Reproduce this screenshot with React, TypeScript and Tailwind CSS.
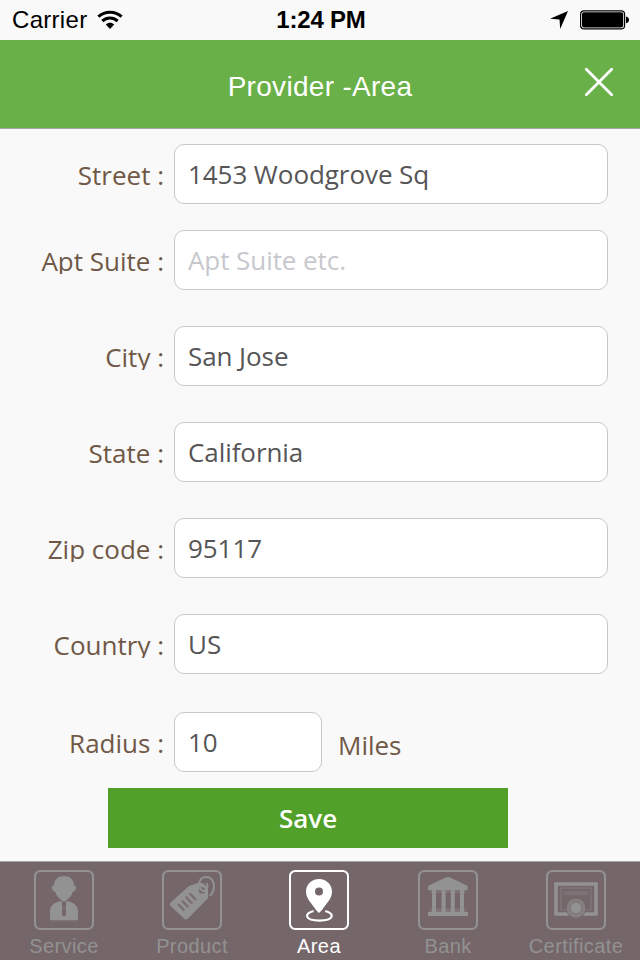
import type { ReactNode } from "react";

const sans = "font-['Liberation_Sans',Arial,sans-serif]";

function StatusBar() {
  return (
    <div className={`flex h-10 items-center justify-between bg-[#f9f9f9] pl-3 pr-[10px] text-black ${sans}`}>
      <div className="flex w-[200px] items-center gap-[10px]">
        <span className="text-[24px] leading-[42px] tracking-[0.3px]">Carrier</span>
        <svg width="26" height="20" viewBox="0 0 26 20" fill="none" stroke="#000" strokeWidth="3.2">
          <path d="M1.400 6.600C8 .8 18 .8 24.600 6.600" />
          <path d="M5.300 11C9.800 7 16.200 7 20.700 11" />
          <path d="M8.800 14.600c2.500-2.400 5.900-2.400 8.400 0L13 19z" fill="#000" stroke="none" />
        </svg>
      </div>
      <span className="text-[24px] font-bold leading-[42px] tracking-[-0.2px]">1:24 PM</span>
      <div className="flex w-[200px] items-center justify-end gap-3">
        <svg width="18" height="18" viewBox="0 0 18 18">
          <path d="M18 0 10.200 18 9.500 8.600 0 7.800z" />
        </svg>
        <svg width="50" height="20" viewBox="0 0 50 20">
          <rect x=".6" y=".9" width="44" height="18" rx="3.5" fill="none" stroke="#000" strokeWidth="1.2" />
          <rect x="2" y="2.3" width="41.2" height="15.2" rx="2" />
          <path d="M46 6.500c4 .8 4 6 0 6.800z" />
        </svg>
      </div>
    </div>
  );
}

function Header() {
  return (
    <header className={`grid h-[89px] grid-cols-[1fr_auto_1fr] items-center border-b border-[#a6a6a8] bg-[#69b048] text-white ${sans}`}>
      <span />
      <h1 className="pt-[5px] text-[28px] font-normal leading-8 tracking-[0.3px]">Provider -Area</h1>
      <button className="mb-[5px] mr-[26px] justify-self-end" aria-label="Close">
        <svg width="30" height="30" viewBox="0 0 30 30" stroke="#fff" strokeWidth="2.8" strokeLinecap="round">
          <path d="m2.300 2.300 25.400 25.400M27.700 2.300 2.300 27.700" />
        </svg>
      </button>
    </header>
  );
}

type RowProps = { label: string; value: string; gap: string; muted?: boolean; narrow?: boolean; suffix?: string };

function Row({ label, value, gap, muted, narrow, suffix }: RowProps) {
  return (
    <div className={`flex h-[60px] ${gap}`}>
      <div className="mr-[10px] mt-[15px] h-[29px] w-[164px] overflow-hidden whitespace-nowrap text-right text-[26px] leading-[33px] text-[#705846]">
        {label} :
      </div>
      <div
        className={`flex h-[60px] items-center rounded-[10px] border border-[#c8c8ca] bg-white pl-[13px] text-[26px] leading-9 tracking-[-0.07px] ${narrow ? "w-[148px]" : "w-[434px]"} ${muted ? "text-[#c7c7cd]" : "text-[#555556]"}`}
      >
        {value}
      </div>
      {suffix && <span className="ml-4 mt-[15px] text-[26px] leading-9 text-[#705846]">{suffix}</span>}
    </div>
  );
}

const rows: RowProps[] = [
  { label: "Street", value: "1453 Woodgrove Sq", gap: "mt-[15px]" },
  { label: "Apt Suite", value: "Apt Suite etc.", gap: "mt-[26px]", muted: true },
  { label: "City", value: "San Jose", gap: "mt-9" },
  { label: "State", value: "California", gap: "mt-9" },
  { label: "Zip code", value: "95117", gap: "mt-9" },
  { label: "Country", value: "US", gap: "mt-9" },
  { label: "Radius", value: "10", gap: "mt-[38px]", narrow: true, suffix: "Miles" },
];

function IconFrame({ children }: { children: ReactNode }) {
  return (
    <svg width="60" height="60" viewBox="0 0 30 30" fill="currentColor">
      <rect x=".5" y=".5" width="29" height="29" rx="2.6" fill="none" stroke="currentColor" strokeWidth="1" />
      {children}
    </svg>
  );
}

const ServiceIcon = () => (
  <IconFrame>
    <path d="M15 3c3.200 0 5 2 5 4.800 1 .1 1.200.6 1 1.500s-.6 1.500-1.500 1.500c-.6 2.200-2 3.200-3.300 4.400L15 16l-1.200-.8c-1.300-1.200-2.700-2.200-3.300-4.400-.9 0-1.300-.6-1.500-1.500s0-1.400 1-1.500C10 5 11.800 3 15 3z" />
    <path d="M13.300 15.500 15 17l1.700-1.500c3 .9 5.300 2 5.300 5V25H8v-4.500c0-3 2.300-4.100 5.300-5z" />
    <path d="M14 16.200h2v1.800l-.4.500.4 1v3.500h-2v-3.500l.4-1-.4-.5z" fill="#75666a" />
    <path d="M8 25h14v.7H8z" opacity=".3" />
  </IconFrame>
);

const ProductIcon = () => (
  <IconFrame>
    <path d="M13.500 8 18 6.500h2.500L23 9.300V14L13 24.300q-1 1-2 0L4.300 18q-.8-.8 0-1.700z" />
    <circle cx="20" cy="10.2" r="1.6" fill="#75666a" />
    <path d="M20.300 10.500C17.300 8.300 18.500 3.500 22 3.500c3.500 0 4.500 3.700 3.700 6.500-.4 1.500-1 2.500-2 2.800M20.300 10.500c2 .2 3-2.200 2-4" fill="none" stroke="currentColor" strokeWidth="1" />
    <path d="m8 17 3.200 3.400M10 15.200l3.200 3.400M11.900 13.400l3.200 3.400M13.800 11.600l3.200 3.400" stroke="#75666a" strokeWidth="1.1" fill="none" opacity=".85" />
  </IconFrame>
);

const AreaIcon = () => (
  <IconFrame>
    <path
      d="M15 4.500c3.800 0 6.500 2.800 6.500 6.300 0 3.700-3 6.100-5 9.200L15 21.500 13.500 20c-2-3.100-5-5.500-5-9.200 0-3.500 2.700-6.300 6.500-6.300zm0 4.300a2 2 0 1 0 0 4 2 2 0 0 0 0-4z"
      fillRule="evenodd"
    />
    <path d="M12.300 20.500c-5 1.200-4.500 4.800 2.900 4.800s7.900-3.600 2.900-4.800" fill="none" stroke="currentColor" strokeWidth="1.100" />
  </IconFrame>
);

const BankIcon = () => (
  <IconFrame>
    <path d="M14.500 3.500h1L20 5.600 24.800 8v2H5V8l4.800-2.400zM5 21h20v2H5z" />
    <path d="M7 10h2v11H7zM11.800 10h2v11h-2zM16.400 10h2v11h-2zM21 10h2v11h-2z" />
    <path d="M6 10h18v1.500H6zM6 19.300h18V21H6z" opacity=".35" />
  </IconFrame>
);

const CertificateIcon = () => (
  <IconFrame>
    <path d="M5 7h20v15H5z" fill="none" stroke="currentColor" strokeWidth="1.800" />
    <path d="M7.500 9h15v11h-15z" fill="none" stroke="currentColor" strokeWidth=".7" opacity=".4" />
    <path d="M9 10.500h12v2H9z" opacity=".3" />
    <circle cx="15" cy="19" r="5.100" fill="#75666a" />
    <circle cx="15" cy="19" r="4.700" opacity=".6" />
    <circle cx="15" cy="19" r="3.100" fill="none" stroke="#75666a" strokeWidth=".3" />
    <circle cx="15" cy="19" r="2.600" />
  </IconFrame>
);

const tabs = [
  { name: "Service", icon: <ServiceIcon />, shift: "" },
  { name: "Product", icon: <ProductIcon />, shift: "" },
  { name: "Area", icon: <AreaIcon />, shift: "pr-[2px]", active: true },
  { name: "Bank", icon: <BankIcon />, shift: "" },
  { name: "Certificate", icon: <CertificateIcon />, shift: "" },
];

export default function App() {
  return (
    <div className="flex h-[960px] w-[640px] flex-col overflow-hidden bg-[#f9f9f9] font-['Open_Sans','Noto_Sans',sans-serif]">
      <StatusBar />
      <Header />
      <main className="flex-1">
        {rows.map((row) => (
          <Row key={row.label} {...row} />
        ))}
        <button className="ml-[108px] mt-4 block h-[60px] w-[400px] bg-[#50a029] text-[26px] font-semibold leading-[60px] text-white">
          Save
        </button>
      </main>
      <nav className={`grid h-[99px] grid-cols-5 border-t border-[#a8a6a8] bg-[#75666a] ${sans}`}>
        {tabs.map((tab) => (
          <div
            key={tab.name}
            className={`flex flex-col items-center pt-2 ${tab.shift} ${tab.active ? "text-white" : "text-[#929292]"}`}
          >
            {tab.icon}
            <span className="mt-[5px] text-[20px] leading-[22px] tracking-[0.4px]">{tab.name}</span>
          </div>
        ))}
      </nav>
    </div>
  );
}
